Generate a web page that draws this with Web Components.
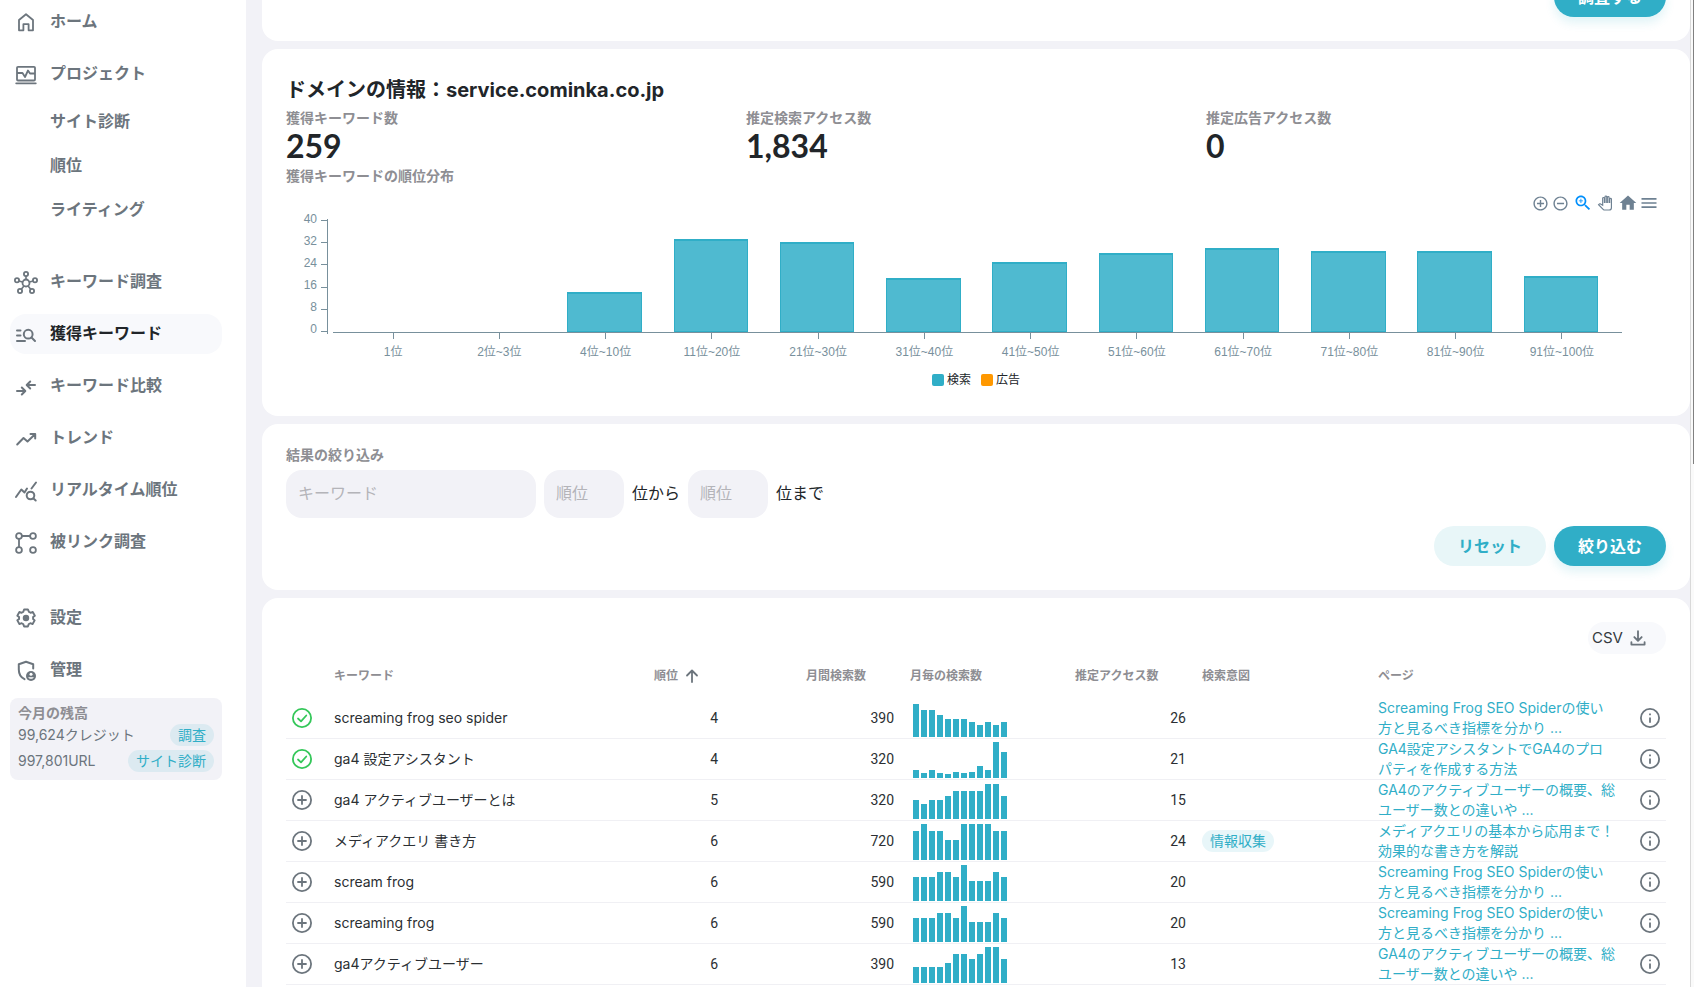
<!DOCTYPE html>
<html lang="ja">
<head>
<meta charset="utf-8">
<title>獲得キーワード</title>
<style>
  html, body { margin: 0; height: 100%; }
  body {
    --teal: #30aec7; --teal-soft: #e8f6f8; --ink: #212529; --muted: #6c757d; --label: #8e8e93;
    --ground: #f2f2f7; --axis: #78909c; --tint: #f8f9fc;
    font-family: Inter, "Noto Sans CJK JP", sans-serif; font-size: 14px; line-height: 20px;
    color: var(--ink); background: var(--ground); overflow: hidden;
  }
</style>
</head>
<body>
<app-shell>
  <side-nav slot="nav"></side-nav>
  <ui-card><action-row><ui-button>調査する</ui-button></action-row></ui-card>
  <ui-card><domain-summary></domain-summary></ui-card>
  <ui-card class="compact"><filter-form></filter-form></ui-card>
  <ui-card><keyword-table></keyword-table></ui-card>
</app-shell>

<script>
const define = (name, html, setup) => {
  const template = document.createElement('template');
  template.innerHTML = '<style>*{box-sizing:border-box}:host{display:block}:host([hidden]){display:none}</style>' + html;
  customElements.define(name, class extends HTMLElement {
    connectedCallback() {
      if (this.shadowRoot) return;
      this.attachShadow({ mode: 'open' }).append(template.content.cloneNode(true));
      if (setup) setup(this, this.shadowRoot);
    }
  });
};

const line = (d, w = 2) => `<path fill="none" stroke="currentColor" stroke-width="${w}" stroke-linecap="round" stroke-linejoin="round" d="${d}"/>`;
const ring = (x, y, r, w = 1.8) => `<circle cx="${x}" cy="${y}" r="${r}" fill="none" stroke="currentColor" stroke-width="${w}"/>`;
const fill = d => `<path fill="currentColor" d="${d}"/>`;
const icons = {
  home: line('M5 10 12 4.3 19 10V20.3H14.6V14.2H9.4V20.3H5Z', 1.8),
  monitor: line('M4 4.8H20A1 1 0 0 1 21 5.800V17.500A1 1 0 0 1 20 18.500H4A1 1 0 0 1 3 17.500V5.800A1 1 0 0 1 4 4.800ZM3 11H8.500L11 15 14 8.500 16 11.500H21', 1.8) + line('M2.200 21.300H21.800', 1.8),
  hub: ring(12, 13, 3.5) + ring(12, 4, 2.1) + ring(3, 10.3, 2.1) + ring(21, 10.3, 2.1) + ring(6, 21, 2.1) + ring(18, 21, 2.1) + line('M12 6.200V9.400M5 11 8.500 12M19 11 15.500 12M7.300 19.200 9.700 16.200M16.700 19.200 14.300 16.200', 1.6),
  manage: line('M3 8.500H6.500M3 13.500H6.500M3 19H11M17.500 15.500 21 19') + ring(14.2, 12.2, 4.4, 2),
  merge: line('M3 17H11M7.800 13.500 11.300 17 7.800 20.500M21 11H13M16.200 7.500 12.700 11 16.200 14.500'),
  trend: line('M3.200 18.500 9.500 12 13.500 15.500 21 8.200M16.500 8H21.200V12.500'),
  query: line('M2 19 7.300 11.500 10.500 14.500 13 10.500M17.500 10.500 22 4.500M19.500 20.500 21.700 22.500') + ring(16.5, 17.5, 3.8, 2),
  link: ring(5, 6, 2.9) + ring(19, 6, 2.9) + ring(5, 20, 2.9) + ring(19, 20, 2.9) + line('M8 6H16M5 9V17', 1.8),
  gear: `<g transform="translate(.6 .6) scale(.95)">${line('M19.430 12.980c.04-.32.07-.64.07-.98s-.03-.66-.07-.98l1.900-1.500-2.200-3.900-2.370.9c-.52-.4-1.080-.73-1.690-.98L14 3h-4l-.87 2.540c-.61.25-1.170.59-1.690.98l-2.370-.9-2.200 3.900 1.900 1.500c-.04.32-.07.65-.07.98s.03.66.07.98l-1.900 1.500 2.200 3.900 2.370-.9c.52.4 1.080.73 1.690.98L10 21h4l.87-2.540c.61-.25 1.170-.59 1.690-.98l2.370.9 2.200-3.900z')}<circle cx="12" cy="12" r="3.4" fill="currentColor"/></g>`,
  shield: line('M10.500 21.200C7 19.500 4.800 16 4.800 11.500V6.200L12 3.700 19.200 6.200V10.500') + '<circle cx="17" cy="18" r="5" fill="currentColor"/><circle cx="17" cy="16.300" r="1.500" fill="#fff"/><path d="M14.200 19.200h5.600c-1 2.200-4.600 2.200-5.600 0z" fill="#fff"/>',
  plusRing: fill('M13 7h-2v4H7v2h4v4h2v-4h4v-2h-4V7zm-1-5C6.480 2 2 6.480 2 12s4.480 10 10 10 10-4.480 10-10S17.520 2 12 2zm0 18c-4.410 0-8-3.590-8-8s3.590-8 8-8 8 3.590 8 8-3.590 8-8 8z'),
  minusRing: fill('M7 11v2h10v-2H7zm5-9C6.480 2 2 6.480 2 12s4.480 10 10 10 10-4.480 10-10S17.520 2 12 2zm0 18c-4.410 0-8-3.590-8-8s3.590-8 8-8 8 3.590 8 8-3.590 8-8 8z'),
  zoomIn: fill('M15.500 14h-.79l-.28-.27C15.410 12.590 16 11.110 16 9.500 16 5.910 13.090 3 9.500 3S3 5.910 3 9.500 5.910 16 9.500 16c1.610 0 3.090-.59 4.230-1.570l.27.28v.79l5 4.990L20.490 19l-4.990-5zm-6 0C7.010 14 5 11.990 5 9.500S7.010 5 9.500 5 14 7.010 14 9.500 11.990 14 9.500 14zM12 10h-2v2H9v-2H7V9h2V7h1v2h2v1z'),
  hand: '<path fill="#fff" stroke="currentColor" stroke-width="2" d="M23 5.500V20c0 2.200-1.800 4-4 4h-7.300c-1.080 0-2.100-.43-2.850-1.190L1 14.830s1.260-1.230 1.300-1.250c.22-.19.49-.29.79-.29.22 0 .42.06.6.16.04.01 4.310 2.460 4.310 2.460V4c0-.83.67-1.500 1.500-1.500S11 3.170 11 4v7h1V1.500c0-.83.67-1.500 1.500-1.500S15 .67 15 1.500V11h1V2.500c0-.83.67-1.500 1.500-1.500s1.500.67 1.500 1.500V11h1V5.500c0-.83.67-1.500 1.500-1.500s1.500.67 1.500 1.500z"/>',
  house: fill('M10 20v-6h4v6h5v-8h3L12 3 2 12h3v8z'),
  menu: fill('M3 18h18v-2H3v2zm0-5h18v-2H3v2zm0-7v2h18V6H3z'),
  download: line('M12 4.500V14.500M8 11 12 15 16 11M4.800 16.500V19.200H19.200V16.500', 2),
  up: line('M12 18V7M7 11.500 12 6.500 17 11.500', 1.8),
  check: ring(12, 12, 9.1) + line('M8 12.500 11 15.300 16.300 9.500', 1.8),
  plus: ring(12, 12, 9.1) + line('M12 8V16M8 12H16', 1.8),
  info: ring(12, 12, 9.1) + '<path d="M12 11.500V16.800M12 7.500V9.200" stroke="currentColor" stroke-width="1.800"/>'
};
const icon = (name, size = 24) => `<ui-icon name="${name}" style="--size:${size}px"></ui-icon>`;

define('ui-icon', '<style>:host{display:block;flex:none;width:var(--size,24px);height:var(--size,24px)}svg{display:block;width:100%;height:100%;overflow:visible}</style><svg viewBox="0 0 24 24" aria-hidden="true"></svg>',
  (el, root) => { root.querySelector('svg').innerHTML = icons[el.getAttribute('name')]; });

define('app-shell', `<style>
  :host{display:flex;height:100vh}
  aside{flex:none;width:246px;background:#fff;padding:2px 24px 8px 10px;overflow:hidden}
  main{flex:1;min-width:0;padding:0 0 8px 16px;overflow:auto;scrollbar-width:none;display:flex;flex-direction:column;gap:8px}
  .track{flex:none;width:4px;background:#fafafa;border-left:1px solid #d9d9d9}
  .thumb{margin-left:auto;width:1px;height:47vh;background:#808080}
</style><aside><slot name="nav"></slot></aside><main><slot></slot></main><div class="track"><div class="thumb"></div></div>`,
  (el, root) => { requestAnimationFrame(() => { root.querySelector('main').scrollTop = 47; }); });

define('ui-card', `<style>
  :host{flex:none;background:#fff;border-radius:16px;padding:24px}
  :host(.compact){padding-top:20px}
</style><slot></slot>`);

define('action-row', '<style>:host{display:flex;justify-content:flex-end;gap:8px}</style><slot></slot>');

define('ui-button', `<style>
  :host{width:112px}
  button{display:block;width:100%;height:40px;border:0;border-radius:20px;padding:0 0 2px;font-family:inherit;font-size:16px;font-weight:700;color:#fff;background:var(--teal);box-shadow:0 6px 10px #30aec724}
  :host([soft]) button{color:var(--teal);background:var(--teal-soft);box-shadow:none}
</style><button type="button"><slot></slot></button>`);

define('ui-pill', `<style>
  :host{display:inline-block}
  a{display:block;padding:0 8px;border-radius:11px;line-height:22px;color:var(--teal);background:#30aec71c;text-decoration:none;white-space:nowrap}
</style><a href="#"><slot></slot></a>`);

define('nav-item', `<style>
  a{display:flex;align-items:center;gap:12px;height:40px;padding:0 4px;border-radius:16px;color:var(--muted);font-size:16px;font-weight:700;text-decoration:none;white-space:nowrap}
  :host([sub]) a{padding-left:40px}
  :host([active]) a{background:var(--tint)}
  :host([active]) span{color:var(--ink)}
  span{padding-bottom:2px}
</style><a href="#"><span><slot></slot></span></a>`,
  (el, root) => {
    const name = el.getAttribute('icon');
    if (name) root.querySelector('a').insertAdjacentHTML('afterbegin', icon(name));
  });

define('credit-box', `<style>
  :host{background:var(--ground);border-radius:8px;padding:4px 8px 8px;color:var(--muted)}
  b{display:block;color:var(--label);line-height:22px}
  p{display:flex;justify-content:space-between;align-items:center;margin:0;height:22px}
  p+p{margin-top:4px}
</style><b>今月の残高</b><p>99,624クレジット<ui-pill>調査</ui-pill></p><p>997,801URL<ui-pill>サイト診断</ui-pill></p>`);

define('side-nav', `<style>
  nav,.group{display:flex;flex-direction:column}
  nav{gap:32px}
  .group{gap:12px}
  .sub{display:flex;flex-direction:column;gap:4px;margin-top:-4px}
  .last{margin-top:4px}
  credit-box{margin-top:8px}
</style><nav>
  <div class="group">
    <nav-item icon="home">ホーム</nav-item>
    <nav-item icon="monitor">プロジェクト</nav-item>
    <div class="sub"><nav-item sub>サイト診断</nav-item><nav-item sub>順位</nav-item><nav-item sub>ライティング</nav-item></div>
  </div>
  <div class="group">
    <nav-item icon="hub">キーワード調査</nav-item>
    <nav-item icon="manage" active>獲得キーワード</nav-item>
    <nav-item icon="merge">キーワード比較</nav-item>
    <nav-item icon="trend">トレンド</nav-item>
    <nav-item icon="query">リアルタイム順位</nav-item>
    <nav-item icon="link">被リンク調査</nav-item>
  </div>
  <div class="group last">
    <nav-item icon="gear">設定</nav-item>
    <nav-item icon="shield">管理</nav-item>
  </div>
</nav><credit-box></credit-box>`);

define('stat-block', `<style>
  .label{font-weight:700;color:var(--label);line-height:22px}
  .value{font:700 32px/34px Lato,sans-serif}
</style><div class="label"><slot></slot></div><div class="value"><slot name="value"></slot></div>`);

const ranks = [['1位', 0], ['2位~3位', 0], ['4位~10位', 14], ['11位~20位', 33], ['21位~30位', 32], ['31位~40位', 19], ['41位~50位', 25], ['51位~60位', 28], ['61位~70位', 30], ['71位~80位', 29], ['81位~90位', 29], ['91位~100位', 20]];

define('rank-chart', `<style>
  :host{padding:0 8px 4px;font:12px/16px "Liberation Sans","Noto Sans CJK JP",sans-serif;color:var(--axis)}
  .tools{display:flex;justify-content:flex-end;align-items:center;height:24px;margin-right:-1px;color:#6e8192}
  .tools button{display:block;border:0;padding:0;background:none;color:inherit}
  .tools .picked{color:#008ffb}
  .tools button:nth-child(1){margin-right:3px}
  .tools button:nth-child(2){margin-right:4px}
  .tools button:nth-child(3){margin-right:5px}
  .tools button:nth-child(4){margin-right:6px}
  .tools button:nth-child(5){margin-right:1px}
  .body{display:flex;gap:5px;margin-top:4px;padding-right:36px}
  .y{flex:none;display:flex;flex-direction:column;justify-content:space-between;width:34px;height:115px;border-right:1px solid var(--axis)}
  .y div{display:flex;justify-content:flex-end;align-items:center;gap:4px;height:1px;margin:1px 0 2px}
  .y span{padding-bottom:4px}
  .y i{width:6px;height:1px;background:var(--axis)}
  .x{flex:1;min-width:0}
  .plot,.names{display:grid;grid-template-columns:repeat(12,1fr);padding:0 7px}
  .plot{height:114px;padding:2px 8px 0 6px;border-bottom:1px solid var(--axis)}
  .plot div{display:flex;align-items:flex-end;justify-content:center}
  .bar{width:70%;background:#4fbad0;border:2px solid var(--teal);border-width:2px 1px 1px}
  .names div{display:flex;flex-direction:column;align-items:center;white-space:nowrap}
  .names i{width:1px;height:6px;background:var(--axis);margin-bottom:5px}
  .legend{display:flex;justify-content:center;gap:10px;margin-top:12px;color:#212529;font-family:Inter,"Noto Sans CJK JP",sans-serif}
  .legend span{display:flex;align-items:center;gap:3px}
  .legend i{width:12px;height:12px;border-radius:2px;background:var(--teal)}
  .legend .ad{background:#ff9800}
</style>
<div class="tools">
  <button aria-label="拡大">${icon('plusRing', 17)}</button><button aria-label="縮小">${icon('minusRing', 17)}</button>
  <button class="picked" aria-label="範囲を拡大">${icon('zoomIn', 20)}</button><button aria-label="移動">${icon('hand', 14)}</button>
  <button aria-label="元に戻す">${icon('house', 20)}</button><button aria-label="メニュー">${icon('menu', 20)}</button>
</div>
<div class="body"><div class="y"></div><div class="x"><div class="plot"></div><div class="names"></div></div></div>
<div class="legend"><span><i></i>検索</span><span><i class="ad"></i>広告</span></div>`,
  (el, root) => {
    root.querySelector('.y').innerHTML = [40, 32, 24, 16, 8, 0].map(n => `<div><span>${n}</span><i></i></div>`).join('');
    root.querySelector('.plot').innerHTML = ranks.map(([, n]) => `<div>${n ? `<div class="bar" style="height:calc(${n / 40 * 100}% + 1px)"></div>` : ''}</div>`).join('');
    root.querySelector('.names').innerHTML = ranks.map(([t]) => `<div><i></i><span>${t}</span></div>`).join('');
  });

define('domain-summary', `<style>
  h2{margin:0 0 2px;padding-top:2px;font-size:20px;line-height:30px;font-weight:700}
  .stats{display:grid;grid-template-columns:repeat(3,1fr)}
  h3{margin:2px 0 4px;font-size:14px;line-height:22px;font-weight:700;color:var(--label)}
</style>
<h2>ドメインの情報：service.cominka.co.jp</h2>
<div class="stats">
  <stat-block>獲得キーワード数<span slot="value">259</span></stat-block>
  <stat-block>推定検索アクセス数<span slot="value">1,834</span></stat-block>
  <stat-block>推定広告アクセス数<span slot="value">0</span></stat-block>
</div>
<h3>獲得キーワードの順位分布</h3>
<rank-chart></rank-chart>`);

define('filter-form', `<style>
  .title{display:block;width:max-content;font-weight:700;color:var(--label);line-height:22px;margin-bottom:4px}
  .row{display:flex;align-items:center;gap:8px;margin-bottom:8px;font-size:16px}
  input{height:48px;border:0;border-radius:16px;padding:0 12px 2px;background:var(--ground);font:inherit;color:inherit;width:80px}
  input.wide{width:250px}
  input::placeholder{color:#b4b4b9;opacity:1}
  .row label{padding-bottom:2px}
</style>
<form>
  <label class="title" for="kw">結果の絞り込み</label>
  <div class="row"><input class="wide" id="kw" placeholder="キーワード"><input id="from" placeholder="順位"><label for="from">位から</label><input id="to" placeholder="順位"><label for="to">位まで</label></div>
  <action-row><ui-button soft>リセット</ui-button><ui-button>絞り込む</ui-button></action-row>
</form>`);

define('mini-bars', `<style>
  :host{display:flex;align-items:flex-end;gap:2px;height:36px}
  i{width:6px;background:var(--teal)}
</style>`, (el, root) => {
  root.innerHTML += el.getAttribute('values').split(' ').map(v => `<i style="height:${v}px"></i>`).join('');
});

const frog = 'Screaming Frog SEO Spiderの使い<br>方と見るべき指標を分かり ...';
const active = 'GA4のアクティブユーザーの概要、総<br>ユーザー数との違いや ...';
const rows = [
  [1, 'screaming frog seo spider', 4, 390, '33 27 27 22 18 18 18 15 12 15 12 15', 26, '', frog],
  [1, 'ga4 設定アシスタント', 4, 320, '8 5 8 5 4 6 5 6 12 8 36 26', 21, '', 'GA4設定アシスタントでGA4のプロ<br>パティを作成する方法'],
  [0, 'ga4 アクティブユーザーとは', 5, 320, '19 15 19 19 23 28 28 28 28 35 35 23', 15, '', active],
  [0, 'メディアクエリ 書き方', 6, 720, '29 36 29 29 20 20 36 36 36 36 29 29', 24, '情報収集', 'メディアクエリの基本から応用まで！<br>効果的な書き方を解説'],
  [0, 'scream frog', 6, 590, '24 24 24 29 29 24 36 20 20 20 29 24', 20, '', frog],
  [0, 'screaming frog', 6, 590, '24 24 24 29 29 24 36 20 20 20 29 24', 20, '', frog],
  [0, 'ga4アクティブユーザー', 6, 390, '16 16 16 16 20 29 29 24 29 36 36 24', 13, '', active]
];

define('keyword-table', `<style>
  .bar{display:flex;justify-content:flex-end}
  .csv{display:flex;align-items:center;gap:4px;width:78px;height:32px;border:0;border-radius:16px;padding:0 4px;background:var(--tint);font:inherit;font-size:15px;color:#343a40}
  .csv ui-icon,button{color:var(--muted)}
  table{width:100%;border-collapse:collapse;table-layout:fixed}
  th{height:44px;padding:0 8px;text-align:left;font-size:12px;font-weight:700;color:var(--label);white-space:nowrap}
  th.volume{padding-left:80px}
  th div{display:flex;align-items:center;gap:2px}
  th ui-icon{color:var(--muted)}
  td{height:40px;padding:0 8px;vertical-align:middle;color:#2b2f33}
  tbody tr{border-bottom:1px solid #f0f0f4}
  .edge{padding:0}
  .edge button{display:grid;place-items:center;width:32px;height:32px;border:0;padding:0;background:none}
  .edge button.done{color:#34c759}
  .num{text-align:right;font-family:Roboto,sans-serif;font-size:14px}
  .spark{padding:2px 11px 0}
  .page{white-space:nowrap}
  .page a{display:block;color:var(--teal);text-decoration:none;line-height:20px}
</style>
<div class="bar"><button class="csv" type="button">CSV${icon('download', 22)}</button></div>
<table>
  <colgroup><col style="width:40px"><col><col style="width:80px"><col style="width:176px"><col style="width:165px"><col style="width:127px"><col style="width:176px"><col style="width:264px"><col style="width:32px"></colgroup>
  <thead><tr><th></th><th>キーワード</th><th><div>順位${icon('up', 24)}</div></th><th class="volume">月間検索数</th><th>月毎の検索数</th><th>推定アクセス数</th><th>検索意図</th><th>ページ</th><th></th></tr></thead>
  <tbody></tbody>
</table>`, (el, root) => {
  root.querySelector('tbody').innerHTML = rows.map(([done, kw, rank, vol, bars, access, intent, page]) => `<tr>
    <td class="edge"><button type="button" aria-label="追加"${done ? ' class="done"' : ''}>${icon(done ? 'check' : 'plus')}</button></td>
    <td>${kw}</td><td class="num">${rank}</td><td class="num">${vol}</td><td class="spark"><mini-bars values="${bars}"></mini-bars></td>
    <td class="num">${access}</td><td>${intent && `<ui-pill>${intent}</ui-pill>`}</td><td class="page"><a href="#">${page}</a></td>
    <td class="edge"><button type="button" aria-label="詳細">${icon('info')}</button></td></tr>`).join('');
});
</script>
</body>
</html>
